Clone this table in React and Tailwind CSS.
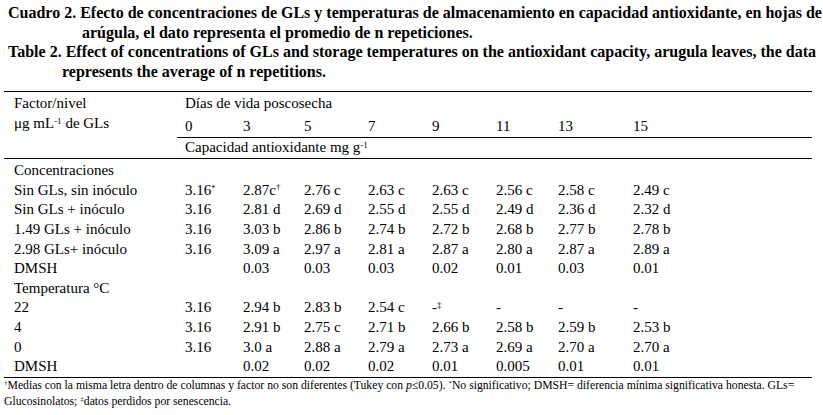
import React from "react";

const G = "grid grid-cols-[173px_58px_61px_64px_64px_64px_62px_75px_1fr]";

const rows = [
  ["Concentraciones"],
  ["Sin GLs, sin inóculo", <>3.16<sup className="text-[8px]">*</sup></>, <>2.87c<sup className="text-[9px]">†</sup></>, "2.76 c", "2.63 c", "2.63 c", "2.56 c", "2.58 c", "2.49 c"],
  ["Sin GLs + inóculo", "3.16", "2.81 d", "2.69 d", "2.55 d", "2.55 d", "2.49 d", "2.36 d", "2.32 d"],
  ["1.49 GLs + inóculo", "3.16", "3.03 b", "2.86 b", "2.74 b", "2.72 b", "2.68 b", "2.77 b", "2.78 b"],
  ["2.98 GLs+ inóculo", "3.16", "3.09 a", "2.97 a", "2.81 a", "2.87 a", "2.80 a", "2.87 a", "2.89 a"],
  ["DMSH", "", "0.03", "0.03", "0.03", "0.02", "0.01", "0.03", "0.01"],
  ["Temperatura °C"],
  ["22", "3.16", "2.94 b", "2.83 b", "2.54 c", <>-<sup className="text-[9px]">‡</sup></>, "-", "-", "-"],
  ["4", "3.16", "2.91 b", "2.75 c", "2.71 b", "2.66 b", "2.58 b", "2.59 b", "2.53 b"],
  ["0", "3.16", "3.0 a", "2.88 a", "2.79 a", "2.73 a", "2.69 a", "2.70 a", "2.70 a"],
  ["DMSH", "", "0.02", "0.02", "0.02", "0.01", "0.005", "0.01", "0.01"],
];

const days = ["0", "3", "5", "7", "9", "11", "13", "15"];

export default function App() {
  return (
    <div className="w-[823px] h-[415px] bg-white text-black overflow-hidden [font-family:'Liberation_Serif',serif]">
      <div className="pt-[3px] pl-[8px] text-[16px] leading-[19.5px] font-bold">
        <div className="whitespace-nowrap">Cuadro 2. Efecto de concentraciones de GLs y temperaturas de almacenamiento en capacidad antioxidante, en hojas de</div>
        <div className="pl-[74px] whitespace-nowrap">arúgula, el dato representa el promedio de n repeticiones.</div>
        <div className="whitespace-nowrap">Table 2. Effect of concentrations of GLs and storage temperatures on the antioxidant capacity, arugula leaves, the data</div>
        <div className="pl-[54px] whitespace-nowrap">represents the average of n repetitions.</div>
      </div>
      <div className="mt-[10px] ml-[4px] w-[808px] text-[15px]">
        <div className="border-t border-black">
          <div className={G + " h-[21px] items-center"}>
            <div className="pl-[10px]">Factor/nivel</div>
            <div className="col-span-8 pl-[8px]">Días de vida poscosecha</div>
          </div>
          <div className={G + " h-[22px]"}>
            <div className="pl-[10px] leading-[20px]">μg mL<sup className="text-[9px]">-1</sup> de GLs</div>
            {days.map((d) => (
              <div key={d} className="pl-[8px] border-b border-black leading-[22px] pt-[2px]">{d}</div>
            ))}
          </div>
          <div className={G + " h-[23px] items-center"}>
            <div />
            <div className="col-span-8 pl-[8px] pt-[1px]">Capacidad antioxidante mg g<sup className="text-[9px]">-1</sup></div>
          </div>
        </div>
        <div className="border-t border-black pt-[2px]">
          {rows.map((r, i) => (
            <div key={i} className={G + " h-[19.6px] items-center leading-[19px]"}>
              <div className="pl-[10px] whitespace-nowrap">{r[0]}</div>
              {r.length > 1 && r.slice(1).map((c, j) => (
                <div key={j} className="pl-[8px] whitespace-nowrap">{c}</div>
              ))}
            </div>
          ))}
        </div>
        <div className="border-t border-black text-[11.7px] leading-[16px]">
          <div className="whitespace-nowrap"><sup className="text-[7px]">†</sup>Medias con la misma letra dentro de columnas y factor no son diferentes (Tukey con <i>p</i>≤0.05). <sup className="text-[7px]">*</sup>No significativo; DMSH= diferencia mínima significativa honesta. GLs=</div>
          <div className="whitespace-nowrap"><span>Glucosinolatos; </span><sup className="text-[7px]">‡</sup>datos perdidos por senescencia.</div>
        </div>
      </div>
    </div>
  );
}
